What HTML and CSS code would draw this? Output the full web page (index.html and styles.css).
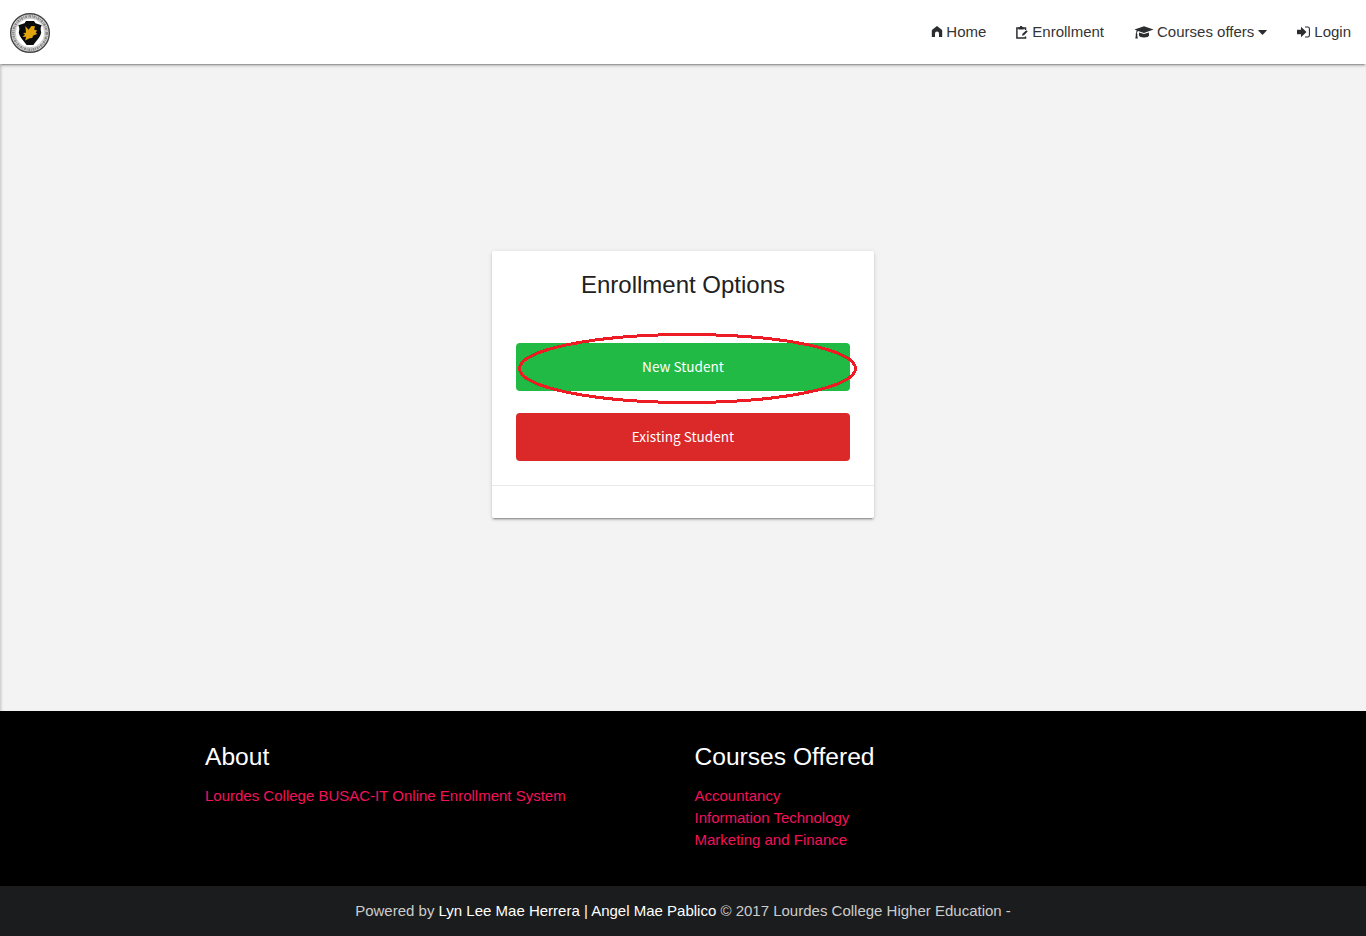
FILE: index.html
```html
<!DOCTYPE html>
<html lang="en">
<head>
<meta charset="utf-8">
<title>Enrollment Options</title>
<link rel="stylesheet" href="styles.css">
</head>
<body>
<nav class="navbar">
  <a class="brand" href="#" aria-label="Lourdes College">
    <svg width="40" height="40" viewBox="0 0 40 40">
      <circle cx="20" cy="20" r="19.3" fill="#e6e6e6" stroke="#444" stroke-width="1.400"/>
      <circle cx="20" cy="20" r="16.7" fill="none" stroke="#8a8a8a" stroke-width="2.700" stroke-dasharray="2 .7 1 .6"/>
      <circle cx="20" cy="20" r="14.800" fill="#fff" stroke="#aaa" stroke-width=".6"/>
      <path d="M16 8h8l1.500 2.200 6.200 2c-1.700 3-.9 5-.5 7.300-.8 4.800-5.100 8.500-7.800 12.500h-6.800c-2.700-4-7-7.700-7.800-12.500.4-2.300 1.200-4.300-.5-7.300l6.200-2z" fill="#090a0b"/>
      <path d="M15.300 13l3.200 3.700 3-3.700 3.500.2-.8 3.500 3 .8-1.500 2 1.500 1.500-4 1.500-1 2.500-2.500.2-4.500 2.300.8-3.800-3.500.3 2.500-2.500-2-1.500 3-.3z" fill="#e2a40d"/>
    </svg>
  </a>
  <ul class="menu">
    <li><a href="#"><svg class="home" width="12" height="12" viewBox="0 0 12 12"><path d="M6 0L10.500 3.500q.7.500.7 1.300V11H8V7.500a2 2 0 0 0-4 0V11H.8V4.800q0-.8.700-1.300z" fill="#2b2d30"/></svg><span>Home</span></a></li>
    <li><a href="#"><svg class="clip" width="12" height="13" viewBox="0 0 12 13"><path d="M9.500 4V1.900H.9v10.200h8.600V10.500" fill="none" stroke="#2b2d30" stroke-width="1.500"/><path d="M2.500 3.500V1.300h1.300L4.200 0h1.800l.4 1.300h1.300v2.200z" fill="#2b2d30"/><path d="M6 9.800l.5-2 3.800-3.600 1.400 1.400L8 9.300z" fill="#2b2d30"/></svg><span>Enrollment</span></a></li>
    <li><a href="#"><svg class="cap" width="20" height="13" viewBox="0 0 20 13"><path d="M10 .3L19.500 3.600 10 6.900 4 4.900Q3 5.500 2.900 7.200q1 .9.300 1.900l.6 3.400H1.300l.6-3.400q-.8-1 .2-1.900.1-1.800.7-2.700L.5 3.600z" fill="#2b2d30"/><path d="M5.100 6.500L10 8.100l4.900-1.600.2 3.100q-.8 1.900-5.100 1.900t-5.100-1.900z" fill="#2b2d30"/></svg><span>Courses offers</span><svg class="caret" width="9" height="5" viewBox="0 0 9 5"><path d="M.7 0h7.600q.8 0 .3.700L5 4.600q-.5.500-1 0L.4.700Q0 0 .7 0z" fill="#2b2d30"/></svg></a></li>
    <li><a href="#"><svg class="login" width="13" height="12" viewBox="0 0 13 12"><path d="M0 3.700h4V.8L9.500 6 4 11.200V8.300H0z" fill="#2b2d30"/><path d="M8 1h2.700q1.700 0 1.700 1.700v6.600q0 1.700-1.700 1.700H8" fill="none" stroke="#2b2d30" stroke-width="1.100"/></svg><span>Login</span></a></li>
  </ul>
</nav>
<main class="content">
  <section class="card">
    <div class="card-body">
      <h1>Enrollment Options</h1>
      <div class="option">
        <a class="button green" href="#">New Student</a>
        <svg class="highlight" width="339" height="72" viewBox="0 0 339 72"><ellipse cx="169.500" cy="36.500" rx="168" ry="34" fill="none" stroke="#ed1c24" stroke-width="3" shape-rendering="crispEdges"/></svg>
      </div>
      <a class="button red" href="#">Existing Student</a>
    </div>
    <div class="card-action"></div>
  </section>
</main>
<footer>
  <div class="footer-main">
    <section class="about"><h2>About</h2><a href="#">Lourdes College BUSAC-IT Online Enrollment System</a></section>
    <section><h2>Courses Offered</h2><a href="#">Accountancy</a><a href="#">Information Technology</a><a href="#">Marketing and Finance</a></section>
  </div>
  <div class="copyright"><p>Powered by <b>Lyn Lee Mae Herrera</b> <b>|</b> <b>Angel Mae Pablico</b> © 2017 Lourdes College Higher Education -</p></div>
</footer>
</body>
</html>
```
FILE: styles.css
```css
* { box-sizing: border-box; }
body { margin: 0; height: 936px; display: flex; flex-direction: column; overflow: hidden; background: #f3f3f3; font: 15px/22px "Liberation Sans", Arial, sans-serif; color: #212121; }
a { color: inherit; text-decoration: none; }
svg { display: block; flex: none; }
h1, h2, p { margin: 0; font-weight: 400; }
.navbar { position: relative; flex: none; height: 64px; display: flex; justify-content: space-between; background: #fff; box-shadow: 0 2px 2px 0 rgba(0,0,0,.14), 0 1px 5px 0 rgba(0,0,0,.12), 0 3px 1px -2px rgba(0,0,0,.2); }
.brand { padding: 13px 0 0 10px; }
.menu { display: flex; margin: 0; padding: 0; list-style: none; }
.menu a { display: flex; align-items: center; height: 64px; padding: 0 15px; color: #343434; }
.home { margin-right: 3px; }
.clip { margin-right: 4px; }
.cap { margin-right: 3px; }
.caret { margin-left: 4px; }
.login { margin-right: 4px; }
.content { flex: none; height: 647px; padding-top: 187px; box-shadow: inset 3px 0 3px -2px rgba(0,0,0,.2); }
.card { width: 382px; height: 267px; margin: 0 auto; background: #fff; border-radius: 2px; box-shadow: 0 2px 2px 0 rgba(0,0,0,.14), 0 1px 5px 0 rgba(0,0,0,.12), 0 3px 1px -2px rgba(0,0,0,.2); }
.card-body { height: 234px; padding: 18px 24px 0; }
.card h1 { height: 74px; font-size: 24px; line-height: 32px; text-align: center; }
.option { position: relative; margin-bottom: 22px; }
.button { display: block; height: 48px; border-radius: 4px; color: #fff; font: 400 13.600px/47px "Noto Sans CJK SC", "Open Sans", sans-serif; text-align: center; }
.green { background: #21ba45; }
.red { background: #db2828; }
.highlight { position: absolute; left: 2px; top: -11px; }
.card-action { height: 33px; border-top: 1px solid #e9e9e9; }
footer { flex: none; background: #000; color: #fff; }
.footer-main { height: 175px; padding: 30px 0 0 205px; display: flex; }
.about { width: 489.500px; }
.footer-main h2 { height: 44px; font-size: 24.600px; line-height: 32px; }
.footer-main a { display: block; color: #f3125b; }
.copyright { height: 50px; background: #1b1c1d; color: #ccc; line-height: 50px; text-align: center; }
.copyright b { color: #fff; font-weight: 400; }
```
